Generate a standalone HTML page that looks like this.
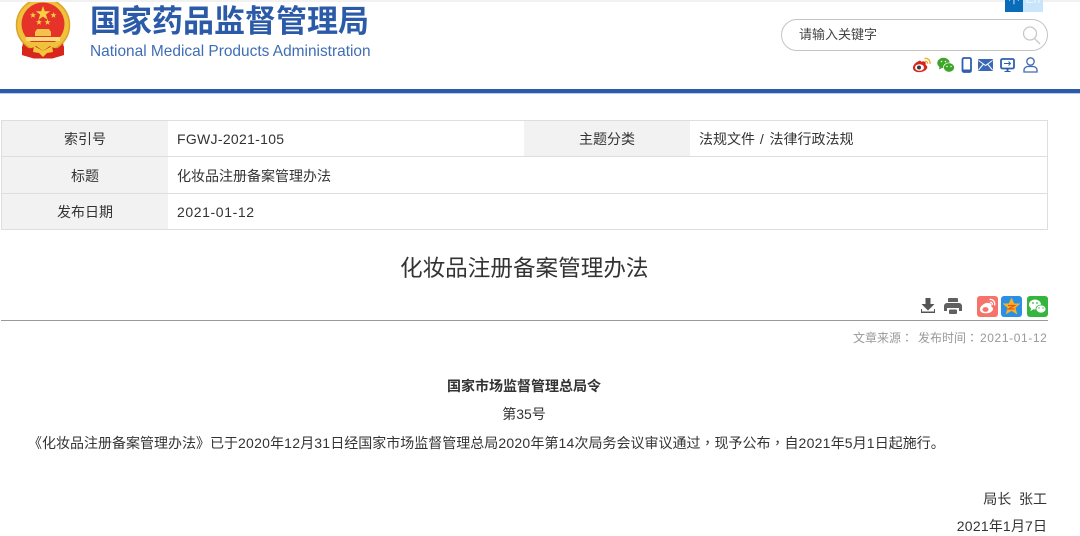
<!DOCTYPE html>
<html lang="zh"><head><meta charset="utf-8"><title>化妆品注册备案管理办法</title>
<style>
html,body{margin:0;padding:0;background:#fff}
body{width:1080px;height:532px;overflow:hidden;position:relative;font-family:"Liberation Sans","Noto Sans CJK SC",sans-serif;color:#333}
.a{position:absolute;white-space:nowrap}
.c{position:absolute;line-height:36px;height:36px;font-size:14px;color:#333;white-space:nowrap}
.l{background:#f2f2f2;text-align:center}
.h{position:absolute;background:#dedede}
.n{letter-spacing:.6px}
.m{letter-spacing:.25px}
.t{font-family:"Noto Sans CJK TC",sans-serif}
</style></head><body>
<div class="a" style="left:0;top:0;width:1080px;height:2px;background:#f1f1f1"></div>
<svg class="a" style="left:14px;top:2px" width="58" height="57" viewBox="0 0 58 57">
<path d="M9 38 L8 53 L20 56.500 L38 56.500 L50 53 L49 38Z" fill="#d8261c"/>
<circle cx="29" cy="23" r="26.500" fill="#eec23a" stroke="#dca22a" stroke-width="1.500"/>
<circle cx="29" cy="22" r="21.500" fill="#e5332a"/>
<path d="M29 4l1.800 5.200h5.500l-4.400 3.300 1.700 5.300-4.600-3.200-4.600 3.200 1.700-5.300-4.400-3.300h5.500z" fill="#f6d043"/>
<path d="M19 10l.8 2.200h2.300l-1.900 1.400.7 2.300-1.900-1.400-1.900 1.400.7-2.300-1.900-1.400h2.300zM39.500 10l.8 2.200h2.300l-1.900 1.400.7 2.300-1.900-1.400-1.900 1.400.7-2.300-1.900-1.400h2.300zM25 17l.8 2.200h2.300l-1.900 1.400.7 2.300-1.900-1.400-1.900 1.400.7-2.300-1.900-1.400h2.300zM33.500 17l.8 2.200h2.300l-1.900 1.400.7 2.300-1.900-1.400-1.900 1.400.7-2.300-1.900-1.400h2.300z" fill="#f6d043"/>
<path d="M23 27h12l2 3H21zM21 30h16v4H21z" fill="#f2c24a"/>
<rect x="12" y="35" width="34" height="4" fill="#f8dc7c"/>
<path d="M15 40h28l-3 5H18z" fill="#eec23a"/>
<path d="M8 44c5 3 9 3 14 0l7 5 7-5c5 3 9 3 14 0l0 9-12 3.500H20L8 53z" fill="#d8261c"/>
<path d="M20 44l9 5 9-5 1 6-6 1-4 4-4-4-6-1z" fill="#f2c93c"/>
</svg>
<div class="a" style="left:90px;top:2px;font-size:31px;line-height:40px;font-weight:700;color:#2b5aa8">国家药品监督管理局</div>
<div class="a" style="left:90px;top:43px;font-size:15.450px;line-height:18px;color:#3f6db5">National Medical Products Administration</div>
<div class="a" style="left:1005px;top:0;width:18px;height:12px;background:#0a6cb8;overflow:hidden;color:#cfe6f8;font-size:12px;line-height:12px;text-align:center"><span style="position:relative;top:-7px">中</span></div>
<div class="a" style="left:1023px;top:0;width:20px;height:12px;background:#c9e5fb;overflow:hidden;color:#eef7ff;font-size:12px;line-height:12px;text-align:center"><span style="position:relative;top:-7px">En</span></div>
<div class="a" style="left:781px;top:19px;width:265px;height:30px;border:1px solid #c4c4c4;border-radius:16px;background:#fff"></div>
<div class="a" style="left:799px;top:25px;font-size:13px;line-height:20px;color:#444">请输入关键字</div>
<svg class="a" style="left:1022px;top:26px" width="20" height="20" fill="none" stroke="#c8c8c8" stroke-width="1.300"><circle cx="8" cy="7.500" r="6.500"/><path d="M12.500 12.500L18 18"/></svg>
<svg class="a" style="left:912px;top:57px" width="20" height="16" viewBox="0 0 20 16"><path d="M8 3.500C4 5 .5 8 1 11.500c.5 3.500 6 4.500 10 3 3.500-1.200 5.500-4 3.500-6-.8-.6-1-1-.8-2 .3-2-2.500-2.500-4.200-1.700z" fill="#d9261c"/><ellipse cx="7.500" cy="10.500" rx="4.500" ry="3.300" fill="#fff"/><circle cx="7" cy="10.500" r="2" fill="#3a3a3a"/><path d="M12.500 1.500c3.500-.8 6 2 5.500 5.500M13 4.300c1.800-.4 2.800 1 2.500 2.500" fill="none" stroke="#f2a91c" stroke-width="1.300"/></svg>
<svg class="a" style="left:937px;top:57px" width="18" height="16" viewBox="0 0 18 16"><ellipse cx="6.500" cy="6" rx="6.200" ry="5.200" fill="#3fa52a"/><path d="M2.500 9.500l-.5 3 3-1.500z" fill="#3fa52a"/><ellipse cx="12" cy="10.500" rx="5.500" ry="4.700" fill="#3fa52a" stroke="#fff" stroke-width=".7"/><circle cx="4.500" cy="4.500" r=".8" fill="#fff"/><circle cx="8.500" cy="4.500" r=".8" fill="#fff"/><circle cx="10" cy="9.500" r=".7" fill="#fff"/><circle cx="14" cy="9.500" r=".7" fill="#fff"/></svg>
<svg class="a" style="left:961px;top:57px" width="12" height="16" viewBox="0 0 12 16"><rect x="1.500" y="1" width="8.500" height="14" rx="1.500" fill="none" stroke="#2f5fae" stroke-width="1.800"/><rect x="1.500" y="12.500" width="8.500" height="2.500" fill="#2f5fae"/></svg>
<svg class="a" style="left:978px;top:59px" width="15" height="12" viewBox="0 0 15 12"><rect width="15" height="12" rx="1" fill="#3a68b6"/><path d="M.5 1.500l7 5 7-5M.5 11l5-6M14.500 11l-5-6" fill="none" stroke="#fff" stroke-width="1"/></svg>
<svg class="a" style="left:1000px;top:58px" width="15" height="15" viewBox="0 0 15 15"><rect x="1" y="1" width="13" height="9.500" rx="1.500" fill="none" stroke="#2f5fae" stroke-width="1.800"/><path d="M4 5.500h6.500M8.500 3.500l2 2-2 2" fill="none" stroke="#2f5fae"/><path d="M6.500 11h2v2h2v1h-6v-1h2z" fill="#2f5fae"/></svg>
<svg class="a" style="left:1023px;top:57px" width="15" height="16" viewBox="0 0 15 16" fill="none" stroke="#3f68b5" stroke-width="1.300"><circle cx="7.500" cy="4.500" r="3.700"/><path d="M1 15v-2c0-2 2-3.500 4-3.500h5c2 0 4 1.500 4 3.500v2z"/></svg>

<div class="a" style="left:0;top:89px;width:1080px;height:4px;background:#2b5aa8"></div>
<div class="a" style="left:0;top:93px;width:1080px;height:1px;background:#b8cdea"></div>

<div class="a" style="left:1px;top:120px;width:1045px;height:108px;border:1px solid #dedede"></div>
<div class="c l" style="left:2px;top:121px;width:166px;height:35px">索引号</div>
<div class="c" style="left:177px;top:121px;letter-spacing:.3px">FGWJ-2021-105</div>
<div class="c l" style="left:524px;top:121px;width:166px;height:35px">主题分类</div>
<div class="c" style="left:699px;top:121px">法规文件<span style="letter-spacing:.95px"> / </span>法律行政法规</div>
<div class="h" style="left:2px;top:156px;width:1045px;height:1px"></div>
<div class="c l" style="left:2px;top:157px;width:166px;line-height:38px">标题</div>
<div class="c" style="left:177px;top:157px;line-height:38px">化妆品注册备案管理办法</div>
<div class="h" style="left:2px;top:193px;width:1045px;height:1px"></div>
<div class="c l" style="left:2px;top:194px;width:166px;height:35px">发布日期</div>
<div class="c n" style="left:177px;top:194px">2021-01-12</div>

<div class="a" style="left:400px;top:251px;font-size:22.600px;line-height:36px;color:#333">化妆品注册备案管理办法</div>

<svg class="a" style="left:919px;top:297px" width="18" height="18" viewBox="0 0 18 18" fill="#555"><path d="M6.500 1h5v6h4l-6.500 6.500L2.500 7h4z"/><path d="M2 12v4h14v-4h-1v2.500H3V12z"/></svg>
<svg class="a" style="left:944px;top:297px" width="18" height="18" viewBox="0 0 18 18" fill="#606060"><path d="M5 1h8a1 1 0 011 1v3H4V2a1 1 0 011-1z"/><path d="M3 6h12a3 3 0 013 3v5h-3v-3H3v3H0V9a3 3 0 013-3z"/><rect x="5" y="12.500" width="8" height="4.500" rx="1"/></svg>
<div class="a" style="left:977px;top:296px;width:21px;height:21px;border-radius:3px;background:#f5736a"></div>
<svg class="a" style="left:977px;top:296px" width="21" height="21" viewBox="0 0 21 21"><path d="M9 7C5 8.500 2.500 11.500 3 14c.6 3.500 6.500 4 10 2.500 3-1.300 4-4 2-5.500-.8-.5-.8-1-.5-2 .4-1.700-3-2.500-5.500-2z" fill="#fff"/><ellipse cx="8.500" cy="13.500" rx="3" ry="2.400" fill="#f5736a"/><path d="M12.500 3.500c3.500-.7 6 2.500 5 6M13 6.300c1.700-.3 2.800 1 2.400 2.600" fill="none" stroke="#fff" stroke-width="1.300"/></svg>
<div class="a" style="left:1001px;top:296px;width:21px;height:21px;border-radius:3px;background:#2a8fe6"></div>
<svg class="a" style="left:1001px;top:296px" width="21" height="21" viewBox="0 0 21 21"><path d="M10.500 1.500l2.700 6h6.300l-5 4.300 1.800 6.700-5.800-3.600-5.800 3.600 1.800-6.700-5-4.300h6.300z" fill="#f6b51e"/><path d="M7 9.500h6.500l-6 3.500h6" fill="none" stroke="#e8542a" stroke-width="1.300"/></svg>
<div class="a" style="left:1027px;top:296px;width:21px;height:21px;border-radius:3px;background:#35b53d"></div>
<svg class="a" style="left:1027px;top:296px" width="21" height="21" viewBox="0 0 21 21" fill="#fff"><ellipse cx="8" cy="8.500" rx="6" ry="5"/><path d="M4 12l-.5 3 3.500-2z"/><ellipse cx="14" cy="13" rx="5" ry="4" stroke="#35b53d" stroke-width=".8"/><circle cx="6" cy="7" r=".9" fill="#35b53d"/><circle cx="10" cy="7" r=".9" fill="#35b53d"/><circle cx="12" cy="12" r=".7" fill="#35b53d"/><circle cx="16" cy="12" r=".7" fill="#35b53d"/></svg>
<div class="a" style="left:1px;top:320px;width:1047px;height:1px;background:#999"></div>

<div class="a" style="left:853px;top:329px;font-size:12px;line-height:18px;color:#999">文章来源<span class="t" lang="zh-TW">：</span></div>
<div class="a" style="left:918px;top:329px;font-size:12px;line-height:18px;color:#999">发布时间<span class="t" lang="zh-TW">：</span></div>
<div class="a n" style="left:980px;top:329px;font-size:12px;line-height:18px;color:#999">2021-01-12</div>

<div class="a" style="left:447px;top:376px;font-size:14px;line-height:20px;font-weight:700;color:#333">国家市场监督管理总局令</div>
<div class="a" style="left:0;top:404px;width:1048px;text-align:center;font-size:14px;line-height:20px;color:#333">第35号</div>
<div class="a" style="left:28px;top:433px;font-size:14px;line-height:20px;color:#333">《化妆品注册备案管理办法》已于<span class="m">2020</span>年<span class="m">12</span>月<span class="m">31</span>日经国家市场监督管理总局<span class="m">2020</span>年第<span class="m">14</span>次局务会议审议通过<span class="t" lang="zh-TW">，</span>现予公布<span class="t" lang="zh-TW">，</span>自<span class="m">2021</span>年<span class="m">5</span>月<span class="m">1</span>日起施行。</div>
<div class="a" style="right:33px;top:489px;font-size:14px;line-height:20px;color:#333">局长&nbsp; 张工</div>
<div class="a" style="right:33px;top:516px;font-size:14px;line-height:20px;color:#333"><span class="m">2021</span>年<span class="m">1</span>月<span class="m">7</span>日</div>
</body></html>
